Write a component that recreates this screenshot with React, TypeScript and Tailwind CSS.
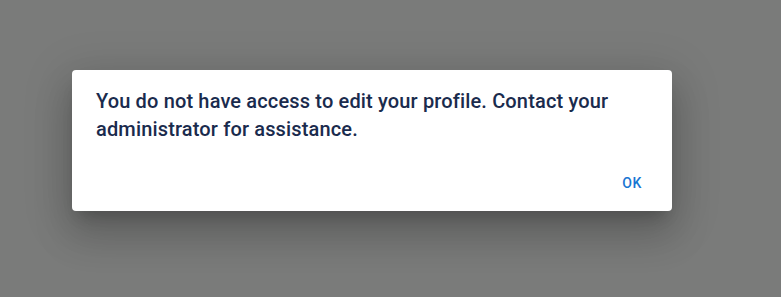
export default function App() {
  return (
    <div
      className="flex h-[297px] w-full items-start bg-[#7a7b7a] pl-[72px] pt-[70px]"
      style={{ fontFamily: 'Roboto, "Noto Sans", sans-serif' }}
    >
      <div className="flex w-[600px] flex-col rounded bg-white shadow-[0_11px_15px_-7px_rgba(0,0,0,0.2),0_24px_38px_3px_rgba(0,0,0,0.14),0_9px_46px_8px_rgba(0,0,0,0.12)]">
        <div className="px-6 pt-[17px] pb-[14px]">
          <p className="text-[20px] font-medium leading-[28px] tracking-[0.15px] text-[#1a2b4d]">
            You do not have access to edit your profile. Contact your administrator for assistance.
          </p>
        </div>
        <div className="flex justify-end px-2 pt-2 pb-[10px]">
          <button className="h-9 min-w-16 rounded px-2 text-sm font-medium uppercase tracking-[0.4px] text-[#1976d2]">
            OK
          </button>
        </div>
      </div>
    </div>
  );
}
